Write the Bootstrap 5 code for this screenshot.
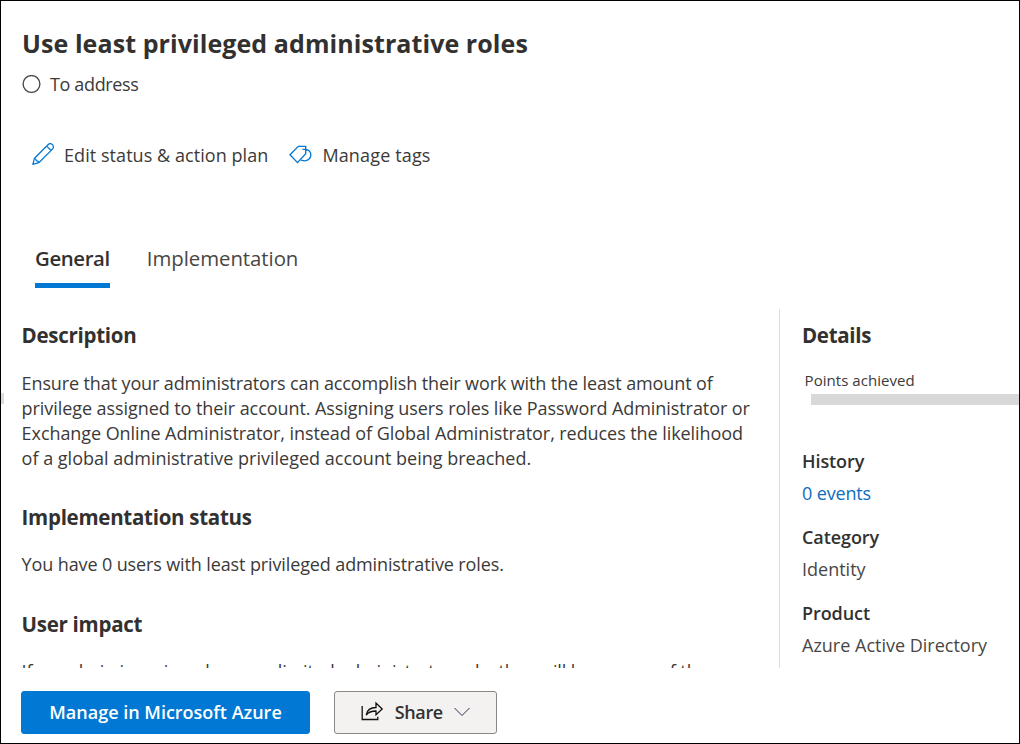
<!DOCTYPE html>
<html lang="en">
<head>
<meta charset="utf-8">
<meta name="viewport" content="width=device-width, initial-scale=1">
<title>Use least privileged administrative roles</title>
<link href="https://cdn.jsdelivr.net/npm/bootstrap@5.3.0/dist/css/bootstrap.min.css" rel="stylesheet">
<style>
  body { font: 400 18px/24px "Open Sans", sans-serif; color: #3b3a39; background: #fff; }
  svg { fill: none; flex: none; }
  .panel { width: 1020px; height: 744px; border: 1px solid #000; padding-top: 25px; }
  .handle { left: 0; top: 392px; width: 3px; height: 11px; background: #dcdcdc; }
  .panel-head { padding-left: 21px; }
  h1 { font-size: 25px; line-height: 34px; font-weight: 700; letter-spacing: .08px; color: #323130; }
  .state { margin-top: 12px; gap: 9px; letter-spacing: -.35px; }
  .commands { margin-top: 47px; padding-left: 10px; gap: 21px; }
  .commands .btn { gap: 10px; color: inherit; font: inherit; letter-spacing: .06px; }
  .commands .btn + .btn { letter-spacing: .15px; }
  .tabs { margin: 77px 0 0 34px; gap: 37px; line-height: 28px; }
  .tabs .nav-link { padding: 0 0 11px; border-bottom: 5px solid transparent; color: #484644; font-size: 20.4px; letter-spacing: -.05px; }
  .tabs .nav-link.active { border-color: #0078d4; color: #323130; font-weight: 600; letter-spacing: -.4px; }
  .content-area { height: 359px; margin-top: 21px; }
  .main-col { width: 778px; padding: 12px 20px 0 20.6px; }
  .main-col p { line-height: 25px; margin: 21px 0 0; white-space: nowrap; letter-spacing: -.12px; }
  .main-col .intro { margin-top: 22px; letter-spacing: -.07px; }
  .intro .tight { letter-spacing: -.12px; }
  .intro .loose { letter-spacing: 0; }
  .main-col h2 { letter-spacing: -.28px; }
  .main-col p + h2 { margin-top: 33px; }
  .main-col .intro + h2 { margin-top: 32px; }
  .side-col { border-left: 1px solid #e1dfdd; padding: 12px 0 0 22px; }
  h2 { font-size: 20.5px; line-height: 28px; font-weight: 700; letter-spacing: -.3px; color: #323130; margin: 0; }
  .points { font-size: 15px; line-height: 20px; margin: 21px 0 0 2.6px; letter-spacing: .05px; }
  .meter { height: 11px; margin: 4px 0 0 9px; background: #d8d8d8; }
  dl { margin: 44px 0 0; }
  dt { font-weight: 600; letter-spacing: -.08px; color: #323130; }
  dd { margin: 8px 0 20px; color: #484644; }
  dd a { color: #0f6cbd; text-decoration: none; letter-spacing: -.15px; }
  .actions { margin-top: 23px; padding-left: 20px; gap: 24px; }
  .actions .btn { height: 43px; border-radius: 3px; padding: 0 0 2px; font-size: 18px; line-height: 24px; font-weight: 600; }
  .btn-manage { width: 289px; background: #0078d4; border-color: #0078d4; color: #fff; }
  .btn-share { width: 163px; background: #f3f2f1; border-color: #8a8886; color: #323130; }
  .btn-share span { margin: 0 11px 0 10.5px; letter-spacing: -.35px; }
</style>
</head>
<body>
<main class="panel position-relative overflow-hidden">
  <div class="handle position-absolute"></div>
  <header class="panel-head">
    <h1 class="m-0">Use least privileged administrative roles</h1>
    <div class="state d-flex align-items-center">
      <svg width="19" height="19" viewBox="0 0 19 19" stroke="#484644" stroke-width="1.35"><circle cx="9.5" cy="9" r="8.4"/></svg>
      <span>To address</span>
    </div>
  </header>
  <div class="panel-head">
    <div class="commands d-flex">
      <button class="btn border-0 p-0 d-flex align-items-center" type="button">
        <svg width="22" height="24" viewBox="0 0 22 24" stroke="#0078d4" stroke-width="1.25" stroke-linejoin="round"><path d="M.8 21.4 2.5 15.3 16 1.7A2.8 2.8 0 0 1 20.5 6.1L6.8 19.7Z M2.5 15.3Q4.2 15.6 4.3 17.7Q6.5 17.9 6.8 19.7 M14.6 3.1 19.1 7.5"/></svg>
        <span>Edit status &amp; action plan</span>
      </button>
      <button class="btn border-0 p-0 d-flex align-items-center" type="button">
        <svg width="23" height="24" viewBox="0 0 23 24" stroke="#0078d4" stroke-width="1.35"><path d="M1 11.8 9.3 3.3H16.7V10.8L8.5 19.6ZM13.5 6.3H16.7C20.3 7 22 9.3 21.8 12.2C21.6 15.6 18.8 17.9 15.5 17.8L11.8 17.2"/></svg>
        <span>Manage tags</span>
      </button>
    </div>
  </div>
  <nav class="tabs nav">
    <a class="nav-link active" href="#">General</a>
    <a class="nav-link" href="#">Implementation</a>
  </nav>
  <div class="content-area d-flex overflow-hidden">
    <section class="main-col flex-shrink-0">
      <h2>Description</h2>
      <p class="intro"><span class="tight">Ensure that your administrators can accomplish their work with the least amount of</span><br>privilege assigned to their account. Assigning users roles like Password Administrator or<br>Exchange Online Administrator, instead of Global Administrator, reduces the likelihood<br><span class="loose">of a global administrative privileged account being breached.</span></p>
      <h2>Implementation status</h2>
      <p>You have 0 users with least privileged administrative roles.</p>
      <h2>User impact</h2>
      <p>If an admin is assigned a more limited administrator role, they will lose some of the</p>
    </section>
    <aside class="side-col flex-grow-1">
      <h2>Details</h2>
      <div class="points">Points achieved</div>
      <div class="meter"></div>
      <dl>
        <dt>History</dt><dd><a href="#">0 events</a></dd>
        <dt>Category</dt><dd>Identity</dd>
        <dt>Product</dt><dd>Azure Active Directory</dd>
      </dl>
    </aside>
  </div>
  <footer class="actions d-flex">
    <button class="btn btn-manage" type="button">Manage in Microsoft Azure</button>
    <button class="btn btn-share d-flex align-items-center justify-content-center" type="button">
      <svg width="23" height="22" viewBox="0 0 23 22" stroke="#111" stroke-width="1.3"><path d="M1.2 5V18.5H16.8V15.8M5.2 14C6 9.4 9.2 6.5 15 6.5V2L21.2 8 15 13.8V10C10.5 10 7.5 11 5.2 14Z"/></svg>
      <span>Share</span>
      <svg width="16" height="10" viewBox="0 0 16 10" stroke="#323150" stroke-width="1"><path d="M.5 1 8 8.5 15.5 1"/></svg>
    </button>
  </footer>
</main>
<script src="https://cdn.jsdelivr.net/npm/bootstrap@5.3.0/dist/js/bootstrap.bundle.min.js"></script>
</body>
</html>
